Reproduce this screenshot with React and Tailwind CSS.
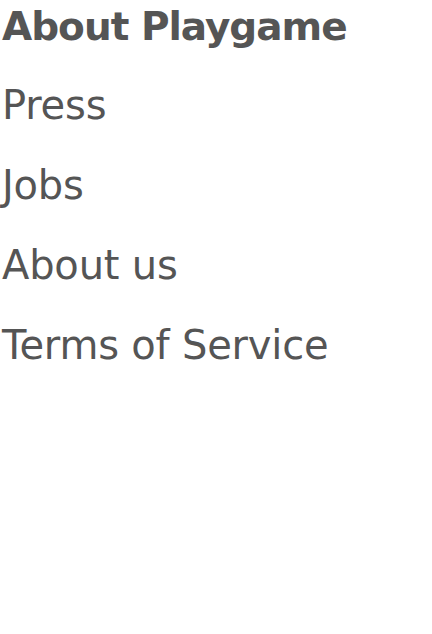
import React from "react";

const links = ["Press", "Jobs", "About us", "Terms of Service"];

const App = () => {
  return (
    <div className="min-h-screen bg-white text-[#555555] font-['DejaVu_Sans',sans-serif] pl-[2px]">
      <h3 className="text-[39px] leading-[53px] font-bold tracking-[-1px]">
        About Playgame
      </h3>
      <ul className="pt-[12px]">
        {links.map((link) => (
          <li key={link} className="text-[40px] leading-[80px] tracking-[-0.2px]">
            <a href="#">{link}</a>
          </li>
        ))}
      </ul>
    </div>
  );
};

export default App;
